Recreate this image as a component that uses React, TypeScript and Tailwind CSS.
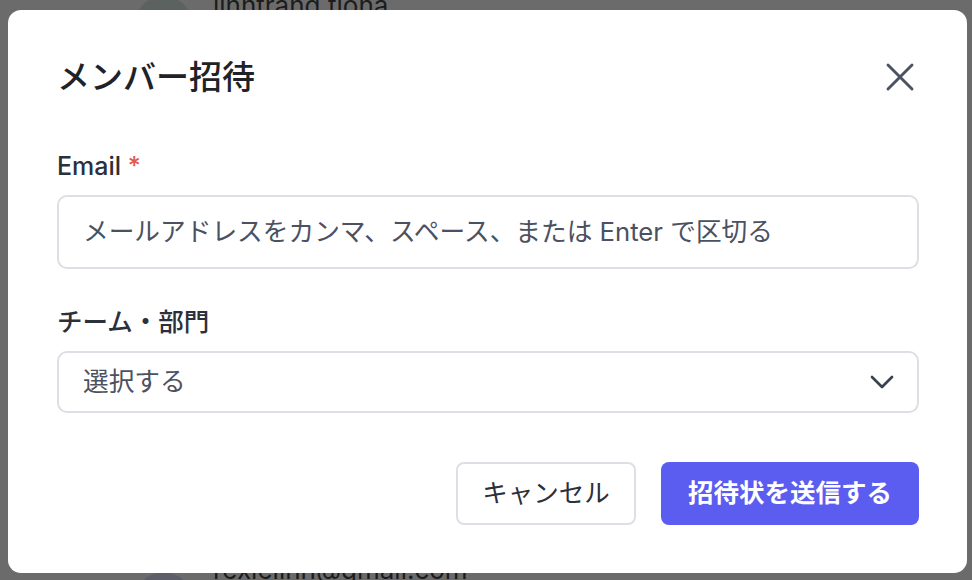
import React from 'react';
import { X, ChevronDown } from 'lucide-react';

const fontStack = { fontFamily: '"Inter", "Noto Sans CJK JP", sans-serif' };

function BackdropPage() {
  return (
    <div className="flex flex-col h-full bg-[#6b6b6b]">
      <div className="flex items-start gap-[21px] pl-[135px] -mt-[10px] h-[60px]">
        <div className="w-[57px] h-[57px] rounded-full bg-[#5b625f] mt-[6px]" />
        <span className="text-[26px] leading-[32px] text-[#1c1c1c]">linhtrang.tiona</span>
      </div>
      <div className="flex-1" />
      <div className="flex items-start gap-[21px] pl-[135px] h-[14px]">
        <div className="w-[57px] h-[57px] rounded-full bg-[#5e5e6a] mt-[6px]" />
        <span className="text-[26px] leading-[32px] text-[#1c1c1c] -mt-[12px]">rexieiinh@gmail.com</span>
      </div>
    </div>
  );
}

function InviteModal() {
  return (
    <div className="absolute left-[8px] top-[10px] w-[959px] h-[563px] bg-white rounded-[13px] pt-[48px] pl-[49px] pr-[48px] pb-[48px] flex flex-col">
      <div className="flex items-center justify-between h-[38px]">
        <h2 className="text-[33px] leading-[38px] font-medium text-[#1f2328]">メンバー招待</h2>
        <button className="w-[48px] h-[48px] -mr-[5px] flex items-center justify-center text-[#4b5263]">
          <X size={48} strokeWidth={1.45} />
        </button>
      </div>

      <label className="mt-[54px] text-[25px] leading-[32px] font-medium text-[#2b303b]">
        Email <span className="text-[#e05a4f]">*</span>
      </label>
      <div className="mt-[13px] h-[74px] border-2 border-[#dcdfe4] rounded-[10px] flex items-center pl-6">
        <span className="text-[25.7px] text-[#4b5161]">メールアドレスをカンマ、スペース、または Enter で区切る</span>
      </div>

      <label className="mt-[37px] text-[25.5px] leading-[32px] font-medium text-[#2b303b]">チーム・部門</label>
      <div className="mt-[13px] h-[62px] border-2 border-[#dcdfe4] rounded-[10px] flex items-center justify-between pl-6 pr-[15px]">
        <span className="text-[25.7px] text-[#4b5161]">選択する</span>
        <ChevronDown size={40} strokeWidth={1.6} className="text-[#3a4150]" />
      </div>

      <div className="mt-[49px] flex justify-end gap-[25px]">
        <button className="h-[63px] w-[180px] border-2 border-[#dcdfe4] rounded-[8px] text-[25.5px] font-normal text-[#2b303b] bg-white">
          キャンセル
        </button>
        <button className="h-[63px] w-[258px] rounded-[8px] bg-[#5b5cf0] text-[25.5px] font-semibold text-white">
          招待状を送信する
        </button>
      </div>
    </div>
  );
}

export default function App() {
  return (
    <div className="relative w-[972px] h-[580px] overflow-hidden" style={fontStack}>
      <BackdropPage />
      <InviteModal />
    </div>
  );
}
